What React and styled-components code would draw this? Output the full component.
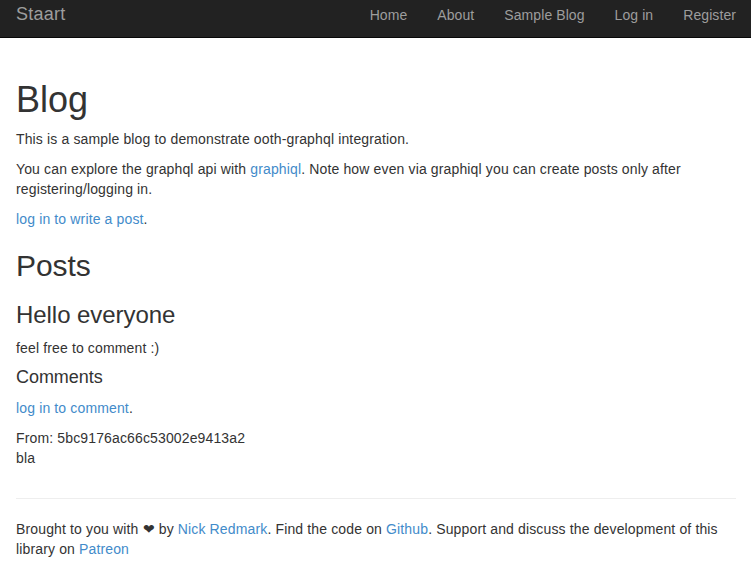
import React from "react";
import styled, { createGlobalStyle } from "styled-components";

const Global = createGlobalStyle`
  * { box-sizing: border-box; }
  html, body { margin: 0; padding: 0; background: #fff; }
  body {
    font-family: "Liberation Sans", Arial, Helvetica, sans-serif;
    font-size: 14px;
    line-height: 1.42857143;
    letter-spacing: 0.14px;
    color: #333;
  }
`;

const Navbar = styled.nav`
  display: flex;
  justify-content: space-between;
  align-items: flex-start;
  height: 38px;
  background: #222;
  border-bottom: 1px solid #080808;
`;

const Brand = styled.a`
  display: block;
  padding: 4px 15px 4px 16px;
  font-size: 18px;
  line-height: 20px;
  letter-spacing: 0.25px;
  color: #9d9d9d;
  text-decoration: none;
`;

const NavList = styled.ul`
  display: flex;
  list-style: none;
  margin: 0;
  padding: 0;
`;

const NavLink = styled.a`
  display: block;
  padding: 5px 15px;
  line-height: 20px;
  letter-spacing: 0.08px;
  color: #9d9d9d;
  text-decoration: none;
`;

const Main = styled.main`
  display: flow-root;
  padding: 21.5px 15px 0 16px;
`;

const Heading = styled.h1`
  font-family: inherit;
  font-weight: 500;
  line-height: 1.1;
  letter-spacing: -0.05px;
  color: inherit;
  font-size: ${(p) => p.$size}px;
  margin: ${(p) => (p.$small ? "10px 0 10px" : "20px 0 10px")};
`;

const P = styled.p`
  margin: 0 0 10px;
`;

const Link = styled.a`
  color: #428bca;
  text-decoration: none;
`;

const Rule = styled.hr`
  margin: 20px 0;
  border: 0;
  border-top: 1px solid #eee;
  height: 0;
`;

const Footer = styled.footer`
  padding: 0 15px 0 16px;
`;

export default function App() {
  return (
    <>
      <Global />
      <Navbar>
        <Brand href="#">Staart</Brand>
        <NavList>
          {["Home", "About", "Sample Blog", "Log in", "Register"].map((t) => (
            <li key={t}>
              <NavLink href="#">{t}</NavLink>
            </li>
          ))}
        </NavList>
      </Navbar>
      <Main>
        <Heading as="h1" $size={36}>Blog</Heading>
        <P>This is a sample blog to demonstrate ooth-graphql integration.</P>
        <P>
          You can explore the graphql api with <Link href="#">graphiql</Link>. Note how even via graphiql
          you can create posts only after registering/logging in.
        </P>
        <P>
          <Link href="#">log in to write a post</Link>.
        </P>
        <Heading as="h2" $size={30}>Posts</Heading>
        <Heading as="h3" $size={24}>Hello everyone</Heading>
        <P>feel free to comment :)</P>
        <Heading as="h4" $size={18} $small>Comments</Heading>
        <P>
          <Link href="#">log in to comment</Link>.
        </P>
        <P>
          From: 5bc9176ac66c53002e9413a2
          <br />
          bla
        </P>
      </Main>
      <Footer>
        <Rule />
        <P>
          Brought to you with ❤ by <Link href="#">Nick Redmark</Link>. Find the code on{" "}
          <Link href="#">Github</Link>. Support and discuss the development of this library on{" "}
          <Link href="#">Patreon</Link>
        </P>
      </Footer>
    </>
  );
}
